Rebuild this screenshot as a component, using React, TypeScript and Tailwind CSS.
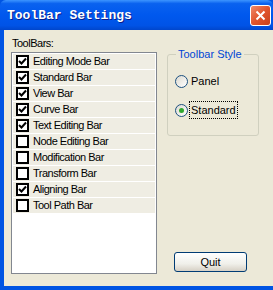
import React from "react";

const items: [string, boolean][] = [
  ["Editing Mode Bar", true],
  ["Standard Bar", true],
  ["View Bar", true],
  ["Curve Bar", true],
  ["Text Editing Bar", true],
  ["Node Editing Bar", false],
  ["Modification Bar", false],
  ["Transform Bar", false],
  ["Aligning Bar", true],
  ["Tool Path Bar", false],
];

function Check({ on }: { on: boolean }) {
  return (
    <div className="w-[13px] h-[13px] border-2 border-black bg-white flex items-center justify-center shrink-0">
      {on && (
        <svg width="9" height="9" viewBox="0 0 9 9">
          <path d="M1 4 L3.5 6.5 L8 1.5" stroke="#000" strokeWidth="2" fill="none" />
        </svg>
      )}
    </div>
  );
}

function Radio({ on }: { on: boolean }) {
  return (
    <div className="w-[13px] h-[13px] rounded-full border border-[#1c5180] bg-[linear-gradient(135deg,#dcdad0,#ffffff)] flex items-center justify-center shrink-0">
      {on && <div className="w-[5px] h-[5px] rounded-full bg-[#2fa82f]" />}
    </div>
  );
}

export default function App() {
  const font = "font-['Liberation_Sans',Arial,sans-serif] text-[11px] tracking-[-0.5px]";
  return (
    <div className="w-[273px] h-[290px] bg-[#0054e3] flex flex-col overflow-hidden">
      <div className="h-[30px] shrink-0 rounded-t-[6px] bg-[linear-gradient(to_bottom,#3d95ff_0%,#0a62ef_12%,#0058ee_50%,#0053e6_85%,#0046cc_100%)] flex items-center pl-[7px] pr-[2px]">
        <span className="font-['Liberation_Mono',monospace] font-bold text-[13px] text-white [text-shadow:1px_1px_#0a1e8c] flex-1 pt-[1px]">
          ToolBar Settings
        </span>
        <div className="w-[21px] h-[21px] rounded-[3px] border border-white bg-[linear-gradient(135deg,#f08a6a,#e0542c_50%,#c8401a)] flex items-center justify-center">
          <svg width="11" height="11" viewBox="0 0 11 11">
            <path d="M1.5 1.5 L9.5 9.5 M9.5 1.5 L1.5 9.5" stroke="#fff" strokeWidth="2" />
          </svg>
        </div>
      </div>
      <div className="flex-1 ml-[4px] mb-[4px] bg-[#ece9d8] flex pl-[7px] pt-[6px]">
        <div className="w-[146px] flex flex-col">
          <div className={`${font} text-black pl-[1px] h-[16px] leading-[14px]`}>ToolBars:</div>
          <div className="h-[222px] border border-[#828790] bg-white pt-[1px] px-[1px]">
            {items.map(([label, on]) => (
              <div key={label} className="h-[16px] bg-[#efede3] border-b border-white flex items-center pl-[3px] gap-[4px]">
                <Check on={on} />
                <span className={`${font} text-black leading-[13px]`}>{label}</span>
              </div>
            ))}
          </div>
        </div>
        <div className="ml-[10px] w-[92px] flex flex-col">
          <div className="mt-[18px] relative h-[82px] border border-[#d0d0bf] rounded-[3px] flex flex-col pl-[7px]">
            <span className={`absolute -top-[8px] left-[8px] px-[2px] bg-[#ece9d8] ${font} tracking-normal text-[#0046d5] leading-[14px]`}>
              Toolbar Style
            </span>
            <div className="flex items-center gap-[3px] mt-[19px]">
              <Radio on={false} />
              <span className={`${font} tracking-normal text-black leading-[14px]`}>Panel</span>
            </div>
            <div className="flex items-center gap-[2px] mt-[14px]">
              <Radio on={true} />
              <span className={`${font} tracking-normal text-black leading-[14px] outline-1 outline-dotted outline-black px-[1px] py-[1px]`}>Standard</span>
            </div>
          </div>
          <div className="mt-[116px] ml-[7px] w-[73px] h-[20px] rounded-[3px] border border-[#003c74] bg-[linear-gradient(to_bottom,#ffffff,#f0f0ea_60%,#d6d0c5)] flex items-center justify-center">
            <span className={`${font} tracking-normal text-black`}>Quit</span>
          </div>
        </div>
      </div>
    </div>
  );
}
